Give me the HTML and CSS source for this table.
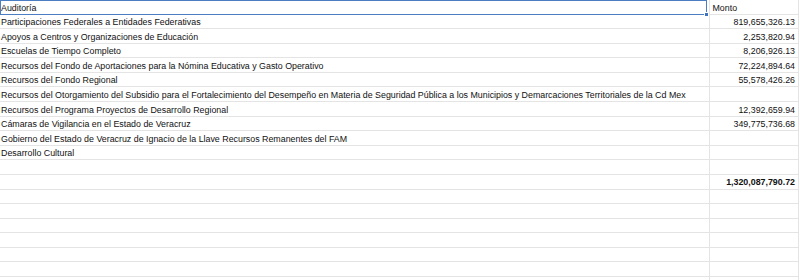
FILE: index.html
```html
<!DOCTYPE html>
<html lang="es">
<head>
<meta charset="utf-8">
<title>Auditoría</title>
<link rel="stylesheet" href="styles.css">
</head>
<body>
<div class="sheet">
  <div class="cell head selected">Auditoría<span class="sel-box"></span><span class="sel-handle"></span></div>
  <div class="cell head">Monto</div>

  <div class="cell">Participaciones Federales a Entidades Federativas</div>
  <div class="cell num">819,655,326.13</div>

  <div class="cell">Apoyos a Centros y Organizaciones de Educación</div>
  <div class="cell num">2,253,820.94</div>

  <div class="cell">Escuelas de Tiempo Completo</div>
  <div class="cell num">8,206,926.13</div>

  <div class="cell">Recursos del Fondo de Aportaciones para la Nómina Educativa y Gasto Operativo</div>
  <div class="cell num">72,224,894.64</div>

  <div class="cell">Recursos del Fondo Regional</div>
  <div class="cell num">55,578,426.26</div>

  <div class="cell">Recursos del Otorgamiento del Subsidio para el Fortalecimiento del Desempeño en Materia de Seguridad Pública a los Municipios y Demarcaciones Territoriales de la Cd Mex</div>
  <div class="cell num"></div>

  <div class="cell">Recursos del Programa Proyectos de Desarrollo Regional</div>
  <div class="cell num">12,392,659.94</div>

  <div class="cell">Cámaras de Vigilancia en el Estado de Veracruz</div>
  <div class="cell num">349,775,736.68</div>

  <div class="cell">Gobierno del Estado de Veracruz de Ignacio de la Llave Recursos Remanentes del FAM</div>
  <div class="cell num"></div>

  <div class="cell">Desarrollo Cultural</div>
  <div class="cell num"></div>

  <div class="cell"></div>
  <div class="cell num"></div>

  <div class="cell"></div>
  <div class="cell num total">1,320,087,790.72</div>

  <div class="cell"></div><div class="cell"></div>
  <div class="cell"></div><div class="cell"></div>
  <div class="cell"></div><div class="cell"></div>
  <div class="cell"></div><div class="cell"></div>
  <div class="cell"></div><div class="cell"></div>
  <div class="cell"></div><div class="cell"></div>
  <div class="cell"></div><div class="cell"></div>
  <div class="cell"></div><div class="cell"></div>
</div>
</body>
</html>
```

FILE: styles.css
```css
html, body {
  margin: 0;
  padding: 0;
  background: #ffffff;
  overflow: hidden;
}

.sheet {
  display: grid;
  grid-template-columns: 710px 89px;
  grid-auto-rows: 14.58px;
  width: 800px;
  height: 280px;
  overflow: hidden;
  font-family: "Liberation Sans", Arial, sans-serif;
  font-size: 8.85px;
  color: #111111;
}

.cell {
  position: relative;
  border-right: 1px solid #e4e4e4;
  border-bottom: 1px solid #e4e4e4;
  padding: 1.5px 0 0 1px;
  line-height: 12px;
  white-space: nowrap;
  overflow: visible;
}

.head + .head {
  padding-left: 2.5px;
}

.num {
  text-align: right;
  padding-right: 3px;
}

.total {
  font-weight: bold;
}

.sel-box {
  position: absolute;
  left: 0;
  top: 0;
  right: 2px;
  bottom: -1px;
  border: 1.5px solid #4a7dc4;
  border-top-width: 1px;
  pointer-events: none;
}

.sel-handle {
  position: absolute;
  right: 0;
  bottom: -3px;
  width: 5px;
  height: 5px;
  background: #3f74c2;
  border: 1px solid #ffffff;
  box-sizing: border-box;
}
```
